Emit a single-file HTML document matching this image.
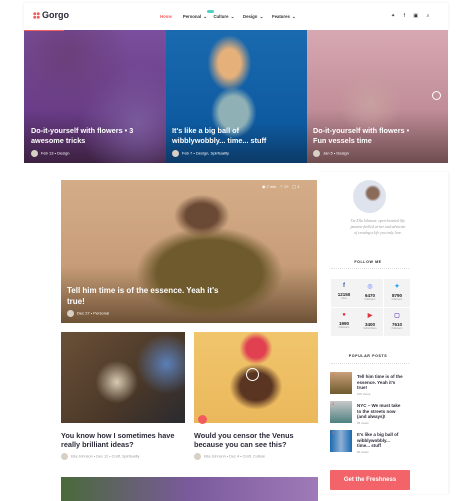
<!DOCTYPE html>
<html><head><style>
*{margin:0;padding:0;box-sizing:border-box}
body{width:463px;height:501px;overflow:hidden;background:#fff;font-family:"Liberation Sans",sans-serif;position:relative}
.a{position:absolute}
.t{color:#fff;font-weight:bold;font-size:7.3px;line-height:9.5px}
.m{color:#fff;font-size:4px}
.dk{color:#2a2a3a;font-weight:bold}
.av{display:inline-block;width:7px;height:7px;border-radius:50%;background:#d8cfc5;vertical-align:middle;margin-right:3px}
.cell{position:absolute;width:26px;height:28px;background:#f3f3f4;text-align:center;font-size:4.5px;font-weight:bold;color:#222}
.cell i{display:block;font-style:normal;font-size:6px;margin-top:4px;margin-bottom:3px}
.cell s{display:block;text-decoration:none;font-size:2.5px;color:#999;font-weight:normal}
</style></head><body>
<div class="a" style="left:24px;top:3px;width:424px;height:28px;background:#fff;box-shadow:0 0 3px rgba(0,0,0,.08)"></div>
<div class="a" style="left:33px;top:12px;width:7px;height:7px;background:
radial-gradient(circle,#f25c5c 1.4px,transparent 1.6px) 0 0/3.5px 3.5px"></div>
<div class="a dk" style="left:42px;top:10px;font-size:9px">Gorgo</div>
<div class="a" style="left:160px;top:14px;font-size:4.3px;color:#333;font-weight:bold;word-spacing:1px"><span style="color:#f25c5c">Home</span>&nbsp;&nbsp;&nbsp;&nbsp; Personal ⌄ &nbsp;&nbsp;Culture ⌄ &nbsp;&nbsp;&nbsp;Design ⌄ &nbsp;&nbsp;&nbsp;Features ⌄</div>
<div class="a" style="left:207px;top:10px;width:7px;height:3px;border-radius:2px;background:#4fd1c5"></div>
<div class="a" style="left:391px;top:13px;font-size:5px;color:#333;word-spacing:7px">✦ f ▣ ⌕</div>
<div class="a" style="left:24px;top:30px;width:142px;height:133px;background:radial-gradient(circle at 30% 20%,#6a3f7a,transparent 45%),radial-gradient(circle at 80% 70%,#7a5a9c,transparent 40%),linear-gradient(180deg,#7b4f9c,#6a3c8a 60%,#3c2140)"></div>
<div class="a" style="left:24px;top:30px;width:40px;height:1px;background:#f25c5c"></div>
<div class="a" style="left:166px;top:30px;width:141px;height:133px;background:radial-gradient(ellipse at 45% 25%,#e6b07a 0 10%,transparent 20%),radial-gradient(ellipse at 48% 62%,#8fb0b5 0 14%,transparent 22%),linear-gradient(180deg,#1a6ab0,#0e5aa0 70%,#0c3a66)"></div>
<div class="a" style="left:307px;top:30px;width:141px;height:133px;background:radial-gradient(circle at 45% 55%,#c8a0a0,transparent 30%),linear-gradient(180deg,#d8a8b2,#c08d98 60%,#6e4c50)"></div>
<div class="a" style="left:432px;top:91px;width:9px;height:9px;border:1px solid #fff;border-radius:50%"></div>
<div class="a t" style="left:31px;top:126px">Do-it-yourself with flowers • 3<br>awesome tricks</div>
<div class="a m" style="left:31px;top:150px"><span class="av"></span>Feb 13 • Design</div>
<div class="a t" style="left:172px;top:126px">It's like a big ball of<br>wibblywobbly... time... stuff</div>
<div class="a m" style="left:172px;top:150px"><span class="av"></span>Feb 7 • Design, Spirituality</div>
<div class="a t" style="left:313px;top:126px">Do-it-yourself with flowers •<br>Fun vessels time</div>
<div class="a m" style="left:313px;top:150px"><span class="av"></span>Jan 5 • Design</div>

<div class="a" style="left:61px;top:180px;width:256px;height:143px;background:radial-gradient(ellipse at 55% 25%,#6b4a35 0 8%,transparent 14%),radial-gradient(ellipse at 58% 65%,#6e5a2c 0 25%,transparent 35%),linear-gradient(180deg,#d4ad88,#c79d78 60%,#6e5236)"></div>
<div class="a m" style="left:262px;top:184px;font-size:4px">◉ 7 min &nbsp; ♡ 2+ &nbsp; ▢ 1</div>
<div class="a t" style="left:67px;top:285px;font-size:8px;line-height:11px">Tell him time is of the essence. Yeah it's<br>true!</div>
<div class="a m" style="left:67px;top:310px"><span class="av"></span>Dec 27 • Personal</div>

<div class="a" style="left:61px;top:332px;width:124px;height:91px;background:radial-gradient(circle at 85% 35%,#5a7fb8,transparent 25%),radial-gradient(circle at 45% 55%,#d8cbb2,transparent 25%),linear-gradient(135deg,#6a5038,#4a3828 60%,#2a2a30)"></div>
<div class="a" style="left:194px;top:332px;width:124px;height:91px;background:radial-gradient(circle at 50% 18%,#e04050 0 10%,transparent 17%),radial-gradient(ellipse at 50% 60%,#5a3522 0 18%,transparent 30%),linear-gradient(#f0c56c,#ebb85c)"></div>
<div class="a" style="left:246px;top:368px;width:13px;height:13px;border:1px solid #fff;border-radius:50%"></div>
<div class="a" style="left:198px;top:415px;width:9px;height:9px;border-radius:50%;background:#f25c5c"></div>
<div class="a dk" style="left:61px;top:431px;font-size:7.3px;line-height:9px">You know how I sometimes have<br>really brilliant ideas?</div>
<div class="a" style="left:61px;top:453px;font-size:3.8px;color:#999"><span class="av"></span>Ella Johnson • Dec 12 • Craft, Spirituality</div>
<div class="a dk" style="left:194px;top:431px;font-size:7.3px;line-height:9px">Would you censor the Venus<br>because you can see this?</div>
<div class="a" style="left:194px;top:453px;font-size:3.8px;color:#999"><span class="av"></span>Ella Johnson • Dec 4 • Craft, Culture</div>
<div class="a" style="left:61px;top:477px;width:257px;height:24px;background:linear-gradient(90deg,#4a6a3a,#7a5a9c 50%,#a07ab8)"></div>

<div class="a" style="left:319px;top:172px;width:129px;height:322px;background:#fff;box-shadow:1px 0 2px rgba(0,0,0,.06)"></div>
<div class="a" style="left:353px;top:180px;width:33px;height:33px;border-radius:50%;background:radial-gradient(circle at 60% 40%,#8a6a58 0 20%,transparent 30%),#dfe3ee"></div>
<div class="a" style="left:328px;top:219px;width:100px;text-align:center;font-family:'Liberation Serif',serif;font-style:italic;font-size:3.8px;line-height:5.8px;color:#999">I'm Ella Johnson: open-hearted life,<br>passion-fuelled writer and advocate<br>of creating a life you truly love.</div>
<div class="a" style="left:328px;top:260px;width:80px;text-align:center;font-size:3.6px;font-weight:bold;letter-spacing:.6px;color:#222">FOLLOW ME</div>
<div class="a" style="left:331px;top:268px;width:78px;border-top:1px dotted #ddd"></div>
<div class="cell" style="left:331px;top:279px"><i style="color:#3b5998">f</i>12150<s>Likes</s></div>
<div class="cell" style="left:357px;top:279px"><i style="color:#8aa0ff">◎</i>6470<s>Followers</s></div>
<div class="cell" style="left:384px;top:279px"><i style="color:#1da1f2">✦</i>8790<s>Followers</s></div>
<div class="cell" style="left:331px;top:308px"><i style="color:#e0303a">●</i>1990<s>Followers</s></div>
<div class="cell" style="left:357px;top:308px"><i style="color:#e0303a">▶</i>3400<s>Subscribers</s></div>
<div class="cell" style="left:384px;top:308px"><i style="color:#7a5ac8">▢</i>7610<s>Followers</s></div>
<div class="a" style="left:328px;top:354px;width:80px;text-align:center;font-size:3.6px;font-weight:bold;letter-spacing:.6px;color:#222">POPULAR POSTS</div>
<div class="a" style="left:331px;top:363px;width:78px;border-top:1px dotted #ddd"></div>
<div class="a" style="left:330px;top:372px;width:22px;height:22px;background:linear-gradient(#c9a07a,#6e5a2c)"></div>
<div class="a" style="left:330px;top:401px;width:22px;height:22px;background:linear-gradient(#c8c8c8,#4e8080)"></div>
<div class="a" style="left:330px;top:430px;width:22px;height:22px;background:linear-gradient(90deg,#1a6ab0,#8fb0d5,#1a6ab0)"></div>
<div class="a" style="left:332px;top:373px;font-size:3.5px;color:#f25c5c;font-weight:bold">1</div>
<div class="a" style="left:332px;top:402px;font-size:3.5px;color:#f25c5c;font-weight:bold">2</div>
<div class="a" style="left:332px;top:431px;font-size:3.5px;color:#f25c5c;font-weight:bold">3</div>
<div class="a dk" style="left:357px;top:374px;font-size:4.5px;line-height:5.5px">Tell him time is of the<br>essence. Yeah it's<br>true!<br><span style="font-weight:normal;color:#999;font-size:3px">105 views</span></div>
<div class="a dk" style="left:357px;top:403px;font-size:4.5px;line-height:5.5px">NYC – We must take<br>to the streets now<br>(and always)!<br><span style="font-weight:normal;color:#999;font-size:3px">95 views</span></div>
<div class="a dk" style="left:357px;top:432px;font-size:4.5px;line-height:5.5px">It's like a big ball of<br>wibblywobbly...<br>time... stuff<br><span style="font-weight:normal;color:#999;font-size:3px">80 views</span></div>
<div class="a" style="left:330px;top:470px;width:80px;height:20px;background:#f2646a;border-radius:1px;color:#fff;font-weight:bold;font-size:6px;text-align:center;line-height:20px">Get the Freshness</div>
</body></html>
